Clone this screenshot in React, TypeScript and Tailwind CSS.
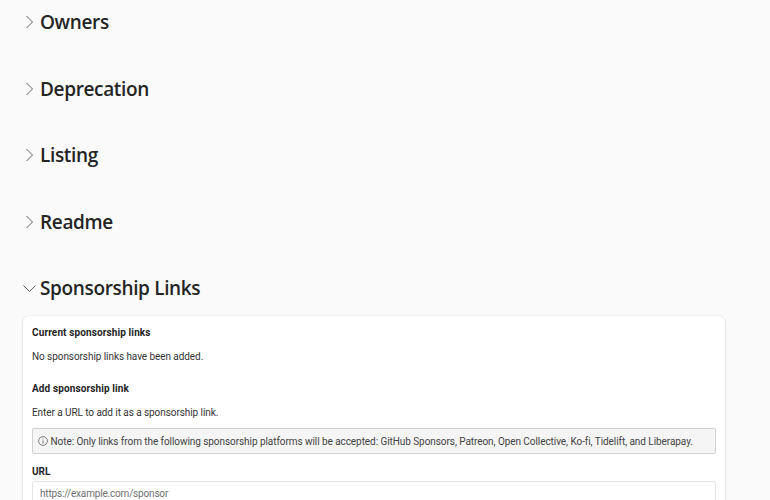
import React from "react"

const body = { fontFamily: 'Roboto, "Noto Sans", sans-serif' }
const heading = { fontFamily: '"Open Sans", "Noto Sans", sans-serif' }

function Chevron({ open }: { open?: boolean }) {
  return (
    <svg width="14" height="14" viewBox="0 0 14 14" fill="none" stroke="#616161" strokeWidth="1" className="shrink-0">
      {open ? <path d="M0.5 4.5 L6.5 10.5 L12.5 4.5" /> : <path d="M3.5 1 L9.5 7 L3.5 13" />}
    </svg>
  )
}

function SectionHeader({ title, open }: { title: string; open?: boolean }) {
  return (
    <div className="flex items-center h-[28px] gap-[3px]">
      <div className="w-[14px] flex justify-center">
        <Chevron open={open} />
      </div>
      <h2 className="text-[19px] leading-[28px] font-semibold text-[#242424] tracking-[-0.35px]" style={heading}>{title}</h2>
    </div>
  )
}

export default function App() {
  return (
    <div className="h-[500px] w-[770px] overflow-hidden bg-[#fafafa] pl-[23px] pt-[8px]" style={body}>
      <div className="flex flex-col gap-[38.5px]">
        <SectionHeader title="Owners" />
        <SectionHeader title="Deprecation" />
        <SectionHeader title="Listing" />
        <SectionHeader title="Readme" />
        <SectionHeader title="Sponsorship Links" open />
      </div>

      <div className="mt-[14px] w-[702px] rounded-[6px] bg-white px-[9px] pt-[10px] pb-4 shadow-[0_0_2px_rgba(0,0,0,0.12),0_1px_2px_rgba(0,0,0,0.14)] text-[#242424]">
        <h3 className="text-[10px] leading-[14px] font-bold tracking-[0.12px]">Current sponsorship links</h3>
        <p className="mt-[10px] text-[10px] leading-[14px] tracking-[-0.07px] text-[#333333]">No sponsorship links have been added.</p>

        <h3 className="mt-[18px] text-[10px] leading-[14px] font-bold tracking-[0.12px]">Add sponsorship link</h3>
        <p className="mt-[10px] text-[10px] leading-[14px] tracking-[-0.07px] text-[#333333]">Enter a URL to add it as a sponsorship link.</p>

        <div className="mt-[8px] flex h-[26px] items-center gap-[2.5px] whitespace-nowrap rounded-[2px] border border-[#d1d1d1] bg-[#f5f5f5] px-[5px] text-[10px] tracking-[-0.065px] text-[#424242]">
          <svg width="10" height="10" viewBox="0 0 10 10" fill="none" stroke="#616161" strokeWidth="0.8" className="shrink-0">
            <circle cx="5" cy="5" r="4.4" />
            <path d="M5 4.4 V7.6 M5 2.4 V3.3" />
          </svg>
          <span>Note: Only links from the following sponsorship platforms will be accepted: GitHub Sponsors, Patreon, Open Collective, Ko-fi, Tidelift, and Liberapay.</span>
        </div>

        <label className="mt-[11px] block text-[10px] leading-[14px] font-bold">URL</label>
        <input
          className="mt-[2px] block h-[24px] w-full rounded-[2px] border border-[#e6e6e6] bg-white px-[7px] text-[10px] tracking-[-0.18px] outline-none placeholder:text-[#707070]"
          placeholder="https://example.com/sponsor"
        />
      </div>
    </div>
  )
}
